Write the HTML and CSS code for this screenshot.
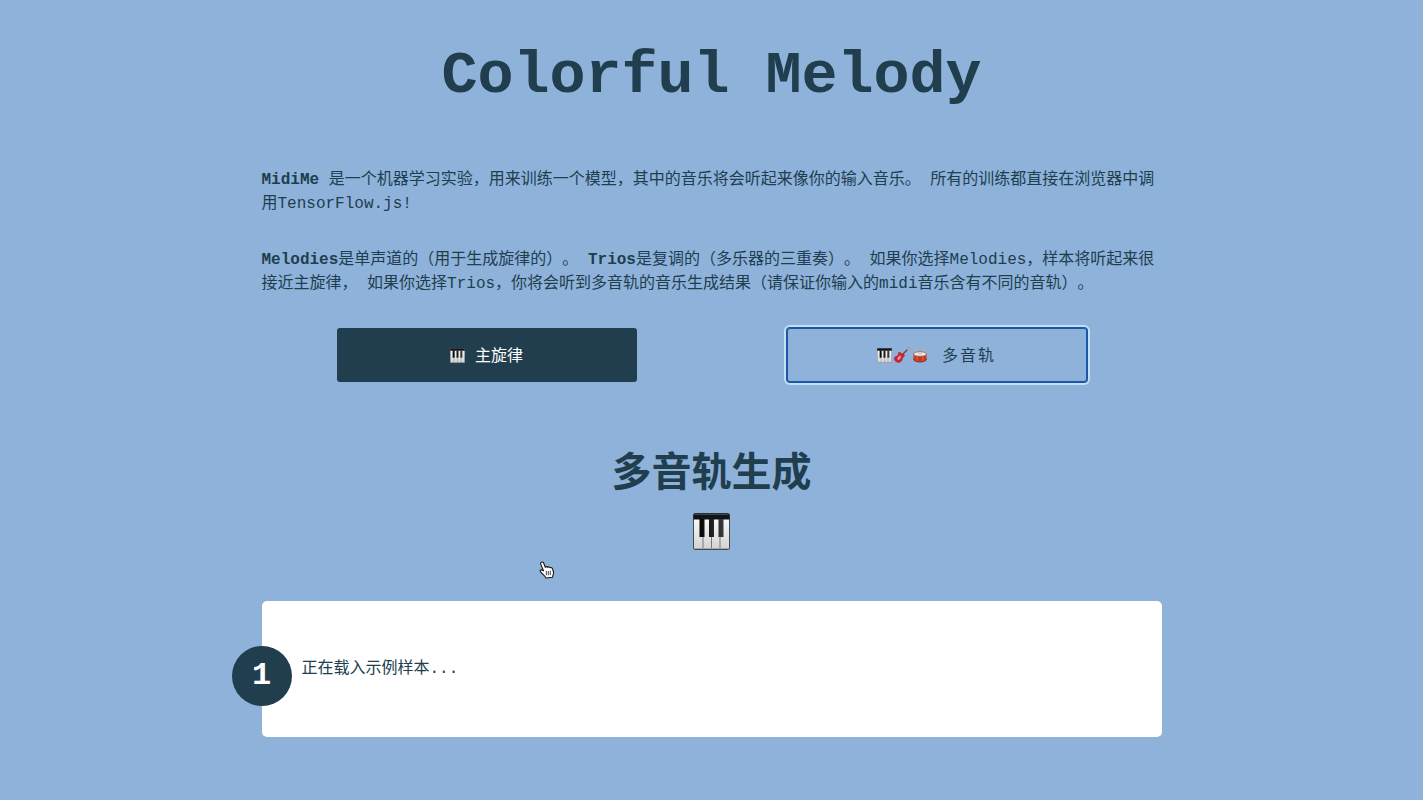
FILE: index.html
```html
<!DOCTYPE html>
<html lang="zh-CN">
<head>
<meta charset="utf-8">
<meta name="viewport" content="width=device-width, initial-scale=1">
<title>Colorful Melody</title>
<link rel="stylesheet" href="styles.css">
</head>
<body>
<svg class="defs" aria-hidden="true">
  <defs>
    <linearGradient id="ivory" x1="0" y1="0" x2="0" y2="1">
      <stop offset="0" stop-color="#ffffff"/>
      <stop offset="1" stop-color="#d2d2d4"/>
    </linearGradient>
    <linearGradient id="ebony" x1="0" y1="0" x2="1" y2="0">
      <stop offset="0" stop-color="#050505"/>
      <stop offset="1" stop-color="#3a3a3c"/>
    </linearGradient>
    <symbol id="piano" viewBox="0 0 37 37">
      <rect x="0.5" y="0.5" width="36" height="36" rx="1.5" fill="url(#ivory)" stroke="#45484d"/>
      <path d="M1.5 0.5h34l1 1v5h-36v-5z" fill="#101317"/>
      <path d="M1 1.5h35" stroke="#3d444b"/>
      <path d="M10 24v12M18.500 24v12M27 24v12" stroke="#77787b"/>
      <path d="M6.500 6h5v18h-5zM16 6h5v18h-5zM25.500 6h5v18h-5z" fill="url(#ebony)"/>
      <path d="M1 35.500h35" stroke="#a6a7a9"/>
    </symbol>
    <symbol id="guitar" viewBox="0 0 16 16">
      <path d="M7.500 8.500L13.500 2.500" stroke="#6f4a3b" stroke-width="1.400"/>
      <path d="M12.600 2.200L14.600 0.400L15.800 1.600L13.900 3.500z" fill="#d9b48d" stroke="#8c6a50" stroke-width="0.400"/>
      <path d="M4.600 5.600C5.900 4.500 6.600 6.100 7.800 6.800C9 7.300 11 7.400 10.500 8.900C9.900 9.900 8.900 9.900 8.600 11C8.200 13.500 6.600 15.800 4 15.500C1.600 15.200 0 13.100 0.400 11.100C0.900 9 3.600 9.200 4.200 8.100C4.600 7.300 3.900 6.400 4.600 5.600z" fill="#d51f31" stroke="#a11426" stroke-width="0.400"/>
      <path d="M6 8.600L7.400 10.100L4.700 12.900L3.300 11.700z" fill="#f3d9d8"/>
      <path d="M4.300 11.500L7 9M4.900 12.300L7.500 9.500" stroke="#59434a" stroke-width="0.400"/>
    </symbol>
    <symbol id="drum" viewBox="0 0 16 16">
      <path d="M3 0.800L7.200 6M12.800 0.800L8.800 6" stroke="#c9b59c" stroke-width="1" stroke-linecap="round"/>
      <path d="M1.500 7v5C2 16 14 16 14.500 12V7z" fill="#c93720"/>
      <path d="M5 9.500v4.800M11 9.500v4.800" stroke="#e8674c" stroke-width="1"/>
      <path d="M1.500 12C2 16 14 16 14.500 12" fill="none" stroke="#7d3228" stroke-width="1"/>
      <ellipse cx="8" cy="7" rx="6.600" ry="2.300" fill="#eee9e4" stroke="#8d6056" stroke-width="0.800"/>
      <path d="M5.500 4.500L7.800 7.300M10.500 4.500L8.500 7.300" stroke="#b3a08c" stroke-width="0.800"/>
    </symbol>
  </defs>
</svg>
<main class="page">
  <h1 class="title">Colorful Melody</h1>
  <p class="text"><strong>MidiMe</strong> 是一个机器学习实验，用来训练一个模型，其中的音乐将会听起来像你的输入音乐。 所有的训练都直接在浏览器中调用TensorFlow.js!</p>
  <p class="text"><strong>Melodies</strong>是单声道的（用于生成旋律的）。 <strong>Trios</strong>是复调的（多乐器的三重奏）。 如果你选择Melodies，样本将听起来很接近主旋律， 如果你选择Trios，你将会听到多音轨的音乐生成结果（请保证你输入的midi音乐含有不同的音轨）。</p>
  <div class="modes">
    <button class="mode mode-solid" type="button">
      <svg class="emoji" aria-hidden="true"><use href="#piano"/></svg>
      <span>主旋律</span>
    </button>
    <button class="mode mode-focus" type="button">
      <span class="emojis">
        <svg class="emoji" aria-hidden="true"><use href="#piano"/></svg>
        <svg class="emoji emoji-wide" aria-hidden="true"><use href="#guitar"/></svg>
        <svg class="emoji emoji-wide" aria-hidden="true"><use href="#drum"/></svg>
      </span>
      <span>多音轨</span>
    </button>
  </div>
  <h2 class="subtitle">多音轨生成</h2>
  <svg class="hero-icon" role="img" aria-label="钢琴"><use href="#piano"/></svg>
  <section class="card">
    <span class="step">1</span>
    <p class="status">正在载入示例样本...</p>
  </section>
</main>
<svg class="cursor" viewBox="0 0 16 18" aria-hidden="true">
  <path d="M2 1.600C3 0.500 4.200 1 4.700 2.200L6.300 6.300C7 5.400 8.300 5.500 8.800 6.300C9.600 5.600 10.700 5.900 11.100 6.800C12.100 6.200 13.200 6.700 13.500 7.800L14.500 11C14.900 12.700 13.800 13.800 13.600 16.200L7 17C6.200 15.200 4.500 14 2.800 12.200C1.800 11.100 0.600 10 1.400 9.200C2.200 8.400 3.400 9 4.500 9.800L1.900 3.600C1.600 2.800 1.500 2.200 2 1.600z" fill="#fff" stroke="#161616" stroke-width="1.100" stroke-linejoin="round"/>
  <path d="M7.300 10v4.300M9.300 10v4.300M11.300 9.800v4.300" stroke="#444" stroke-width="1"/>
</svg>
</body>
</html>
```
FILE: styles.css
```css
* {
  box-sizing: border-box;
}

body {
  margin: 0;
  min-height: 100vh;
  background: #8eb2da;
  color: #203e4e;
  font-family: "Liberation Mono", "Noto Sans CJK SC", monospace;
  font-size: 16px;
  line-height: 24px;
  text-spacing-trim: space-all;
}

.defs {
  position: absolute;
  width: 0;
  height: 0;
}

.page {
  display: flex;
  flex-direction: column;
  align-items: center;
  max-width: 932px;
  margin: 0 auto;
  padding: 40px 16px 64px;
}

.title {
  margin: 0 0 56px;
  font-size: 60px;
  line-height: 72px;
  text-align: center;
}

.text {
  width: 100%;
  margin: 0 0 32px;
}

.modes {
  display: grid;
  grid-template-columns: 1fr 1fr;
  justify-items: center;
  width: 100%;
  margin-bottom: 64px;
}

.mode {
  display: flex;
  align-items: center;
  justify-content: center;
  gap: 10px;
  width: 300px;
  max-width: 90%;
  height: 54px;
  padding: 4px 0 0;
  border: 0;
  border-radius: 3px;
  font: inherit;
  color: inherit;
  background: transparent;
}

.mode-solid {
  background: #203e4e;
  color: #fff;
}

.mode-focus {
  gap: 14px;
  letter-spacing: 2px;
  box-shadow: inset 0 0 0 1px #1b56a9, 0 0 0 1px #1b56a9, 0 0 0 3px #c4dff6;
}

.emojis {
  display: flex;
  align-items: center;
  gap: 2px;
}

.emoji {
  width: 15px;
  height: 15px;
  margin-bottom: 4px;
}

.emoji-wide {
  width: 16px;
  height: 16px;
}

.subtitle {
  margin: 0;
  font-size: 40px;
  line-height: 60px;
  font-weight: 700;
}

.hero-icon {
  width: 37px;
  height: 37px;
  margin: 7px 0 51px;
}

.card {
  position: relative;
  width: 100%;
  padding: 56px 40px;
  border-radius: 5px;
  background: #fff;
}

.step {
  position: absolute;
  top: 45px;
  left: -30px;
  width: 60px;
  height: 60px;
  border-radius: 50%;
  background: #203e4e;
  color: #fff;
  font-size: 32px;
  font-weight: 700;
  line-height: 60px;
  text-align: center;
}

.status {
  margin: 0;
}

.cursor {
  position: absolute;
  top: 561px;
  left: 539px;
  width: 16px;
  height: 18px;
}
```
